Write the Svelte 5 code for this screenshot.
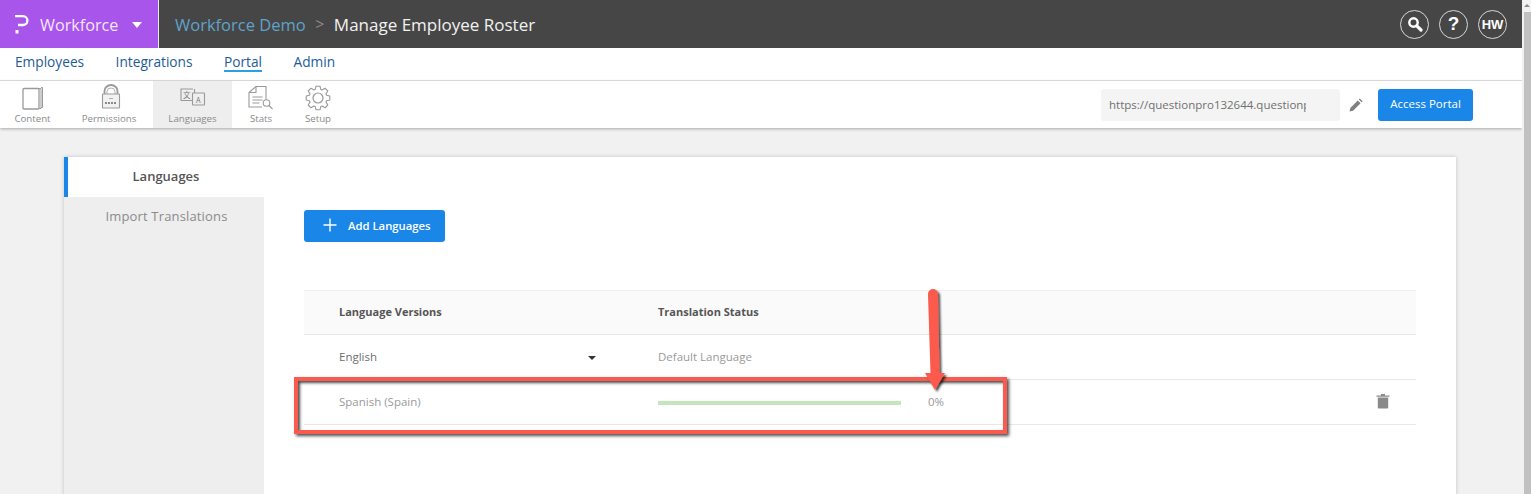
<script>
  const nav = ["Employees", "Integrations", "Portal", "Admin"];
  const tools = [
    { label: "Content", width: 65 },
    { label: "Permissions", width: 88 },
    { label: "Languages", width: 79, active: true },
    { label: "Stats", width: 58 },
    { label: "Setup", width: 56 },
  ];

  // outline of the Setup cog, 8 teeth around (cx, cy)
  function gearPath(cx, cy, outer, inner) {
    const pts = [];
    const step = Math.PI / 8;
    for (let i = 0; i < 8; i++) {
      const a = (i * Math.PI) / 4 - Math.PI / 2;
      const list = [
        [a - step * 0.42, outer],
        [a + step * 0.42, outer],
        [a + step * 0.8, inner],
        [a + step * 1.2, inner],
      ];
      for (const [t, r] of list) {
        pts.push(`${(cx + Math.cos(t) * r).toFixed(1)} ${(cy + Math.sin(t) * r).toFixed(1)}`);
      }
    }
    return "M" + pts.join("L") + "Z";
  }
</script>

<div class="page">
  <div class="main">
    <header class="topbar">
      <div class="brand">
        <svg width="14" height="19" viewBox="0 0 14 19" class="logo">
          <path d="M0 1.200h8a4.400 4.400 0 0 1 0 8.800H3" fill="none" stroke="#fff" stroke-width="2.300" />
          <rect x="0.500" y="15" width="3" height="3.500" fill="#fff" />
        </svg>
        <span class="brand-name">Workforce</span>
        <span class="caret"></span>
      </div>
      <div class="crumbs">
        <span class="crumb-link">Workforce Demo</span>
        <span class="crumb-sep">&gt;</span>
        <span class="crumb-page">Manage Employee Roster</span>
      </div>
      <div class="top-icons">
        <span class="circle">
          <svg width="16" height="16" viewBox="0 0 16 16">
            <circle cx="6.500" cy="6.500" r="4.200" fill="none" stroke="#fff" stroke-width="2.400" />
            <path d="M9.800 9.800L14 14" stroke="#fff" stroke-width="3.200" stroke-linecap="round" />
          </svg>
        </span>
        <span class="circle q">?</span>
        <span class="circle hw">HW</span>
      </div>
    </header>

    <nav class="nav">
      {#each nav as item}
        <span class="nav-item" class:current={item === "Portal"}>{item}</span>
      {/each}
    </nav>

    <div class="toolbar">
      {#each tools as tool}
        <div class="tool" class:active={tool.active} style="width: {tool.width}px">
          <svg width="34" height="28" viewBox="0 0 34 28" fill="none" stroke="#9a9a9a" stroke-width="1">
            {#if tool.label === "Content"}
              <path d="M23 4.500h2v20h-2" />
              <path d="M25 3.500h1.500v20H25" />
              <rect x="7" y="4.500" width="16" height="20.500" rx="1" stroke-width="1.300" />
            {:else if tool.label === "Permissions"}
              <path d="M12.500 10V7a6.500 6 0 0 1 13 0v3" stroke-width="1.800" />
              <path d="M15 10V7.500a4 3.500 0 0 1 8 0V10" stroke-width="0.800" />
              <rect x="10.500" y="10" width="17" height="14" rx="0.500" fill="#f2f2f2" stroke-width="1.100" />
              <path d="M13 19h12" stroke-width="2" stroke-dasharray="2 1" stroke="#8a8a8a" />
              <path d="M17 14.500h4" stroke-width="0.800" />
            {:else if tool.label === "Languages"}
              <path d="M17 5H5v11.500h11" stroke-width="1.100" />
              <path d="M18.500 5v4" stroke-width="1.100" />
              <rect x="16.500" y="9" width="12" height="12" rx="0.500" stroke-width="1.100" />
              <text x="7" y="14" class="glyph">文</text>
              <text x="20" y="18.500" class="glyph">A</text>
            {:else if tool.label === "Stats"}
              <path d="M12 2.500h10v13M12 2.500l-7 6v14.500h13" stroke-width="1.100" />
              <path d="M5 8.500h7v-6" stroke-width="1.100" />
              <path d="M8.500 13h10M8.500 16h10M8.500 19h7" stroke-width="1" />
              <circle cx="22.500" cy="19" r="3.300" stroke-width="1.100" />
              <path d="M25 21.500l3.500 3.500" stroke-width="1.100" />
            {:else}
              <path d={gearPath(17, 14, 12, 9)} stroke-width="1.100" stroke-linejoin="round" />
              <circle cx="17" cy="14" r="5" stroke-width="1.200" />
            {/if}
          </svg>
          <span class="tool-label">{tool.label}</span>
        </div>
      {/each}
      <div class="portal">
        <input class="url" readonly value="https://questionpro132644.questionpro.com/portal" />
        <svg width="14" height="14" viewBox="0 0 14 14" class="pencil">
          <path d="M0.500 13.500l.8-3.600 7.500-7.500 2.800 2.800-7.500 7.500zM9.800 1.400l1-1 2.800 2.800-1 1z" fill="#808080" />
        </svg>
        <button class="primary access">Access Portal</button>
      </div>
    </div>

    <div class="body">
      <section class="card">
        <aside class="side">
          <div class="side-item selected">Languages</div>
          <div class="side-item">Import Translations</div>
        </aside>
        <div class="content">
          <button class="primary add">
            <svg width="14" height="14" viewBox="0 0 14 14">
              <path d="M7 0.500v13M0.500 7h13" stroke="#fff" stroke-width="1.400" />
            </svg>
            Add Languages
          </button>
          <div class="table">
            <div class="row head">
              <div class="c1">Language Versions</div>
              <div class="c2">Translation Status</div>
            </div>
            <div class="row">
              <div class="c1 english">English<span class="small-caret"></span></div>
              <div class="c2 muted">Default Language</div>
            </div>
            <div class="row">
              <div class="c1 muted">Spanish (Spain)</div>
              <div class="c2 progress">
                <div class="bar"></div>
                <span class="muted pct">0%</span>
              </div>
              <svg class="trash" width="14" height="16" viewBox="0 0 14 16">
                <path d="M0.500 2.500h13v1.300h-13zM5 1h4v1.500H5z" fill="#8a8a8a" />
                <path d="M1.800 4.500h10.400v10a1 1 0 0 1-1 1H2.800a1 1 0 0 1-1-1z" fill="#8a8a8a" />
              </svg>
            </div>
          </div>
        </div>
      </section>
    </div>
  </div>
  <div class="scrollbar">
    <span class="up"></span>
    <div class="thumb"></div>
  </div>

  <!-- annotation drawn over the screenshot -->
  <div class="callout"></div>
  <svg class="arrow" width="40" height="112" viewBox="0 0 40 112">
    <defs>
      <filter id="sh" x="-30%" y="-10%" width="170%" height="125%">
        <feDropShadow dx="2" dy="2" stdDeviation="1.200" flood-color="#000" flood-opacity="0.7" />
      </filter>
    </defs>
    <path
      d="M10 5a5 5 0 0 1 10 0L21.500 84H27L17 101 7 84h5.500z"
      fill="#fb5a4e"
      filter="url(#sh)"
    />
  </svg>
</div>

<style>
  :global(body) {
    margin: 0;
    background: #f1f1f1;
    font-family: "Open Sans", "Noto Sans", sans-serif;
  }

  .page {
    position: relative;
    display: flex;
    width: 1531px;
    height: 494px;
    overflow: hidden;
  }

  .main {
    flex: 1;
    min-width: 0;
  }

  .topbar {
    display: flex;
    align-items: center;
    height: 48px;
    background: #464646;
  }

  .brand {
    display: flex;
    align-items: center;
    box-sizing: border-box;
    width: 159px;
    height: 48px;
    padding-left: 15px;
    background: #a855eb;
    border-right: 1px solid #e8e8e8;
    color: #f3e6fd;
    font-size: 16.200px;
  }

  .brand-name {
    margin-left: 11px;
    padding-top: 1px;
  }

  .caret {
    margin-left: 14px;
    margin-top: 1px;
    border-left: 5.500px solid transparent;
    border-right: 5.500px solid transparent;
    border-top: 6px solid #fff;
  }

  .crumbs {
    display: flex;
    align-items: center;
    margin-left: 16px;
    font-size: 17px;
  }

  .crumb-link {
    color: #5fa3c9;
    font-size: 16.500px;
  }

  .crumb-sep {
    margin: 0 9.500px;
    color: #8a8a8a;
    font-size: 16px;
  }

  .crumb-page {
    color: #f2f2f2;
  }

  .top-icons {
    display: flex;
    gap: 10px;
    margin-left: auto;
    margin-right: 15px;
  }

  .circle {
    display: flex;
    align-items: center;
    justify-content: center;
    box-sizing: border-box;
    width: 29px;
    height: 29px;
    border: 1px solid #d8d8d8;
    border-radius: 50%;
    color: #fff;
    font-family: "Liberation Sans", sans-serif;
    font-weight: 700;
  }

  .q {
    font-size: 19px;
  }

  .hw {
    font-size: 13px;
  }

  .nav {
    display: flex;
    gap: 31.500px;
    box-sizing: border-box;
    height: 33px;
    padding: 4px 0 0 15px;
    background: #fff;
    border-bottom: 1px solid #e2e2e2;
  }

  .nav-item {
    height: 18px;
    color: #1d5c97;
    font-size: 13.700px;
    line-height: 20px;
  }

  .nav-item.current {
    border-bottom: 2px solid #2a9fe3;
  }

  .toolbar {
    position: relative;
    display: flex;
    height: 47px;
    background: #fff;
    box-shadow: 0 1px 3px rgba(0, 0, 0, 0.3);
  }

  .tool {
    display: flex;
    flex-direction: column;
    align-items: center;
    height: 47px;
    color: #8a8a8a;
    font-size: 9.700px;
  }

  .tool.active {
    background: #eeeeee;
  }

  .tool svg {
    margin-top: 3px;
  }

  .tool-label {
    line-height: 13px;
    margin-top: 0;
  }

  .glyph {
    fill: #777;
    stroke: none;
    font-size: 7.500px;
    font-family: "Noto Sans CJK SC", "Open Sans", sans-serif;
  }

  .portal {
    display: flex;
    align-items: center;
    margin-left: auto;
    margin-right: 49px;
    height: 47px;
  }

  .url {
    box-sizing: border-box;
    width: 239px;
    height: 32px;
    padding: 0 34px 0 8px;
    background: #f4f4f4;
    border: 0;
    border-radius: 3px;
    outline: 0;
    color: #707070;
    font-family: inherit;
    font-size: 11.500px;
  }

  .pencil {
    margin: 0 15px 0 9px;
  }

  .primary {
    border: 0;
    border-radius: 3px;
    background: #1a87e8;
    color: #fff;
    font-family: inherit;
    font-size: 11.500px;
  }

  .access {
    width: 95px;
    height: 32px;
    padding: 0 0 2px;
  }

  .body {
    padding: 29px 66px 0 64px;
  }

  .card {
    display: flex;
    height: 400px;
    background: #fff;
    box-shadow: 0 0 4px rgba(0, 0, 0, 0.2);
  }

  .side {
    width: 200px;
    flex: none;
    background: #eeeeee;
  }

  .side-item {
    box-sizing: border-box;
    height: 40px;
    padding-left: 5px;
    color: #8b8b8b;
    font-size: 13px;
    line-height: 38px;
    letter-spacing: 0.16px;
    text-align: center;
  }

  .side-item.selected {
    padding-left: 0;
    background: #fff;
    border-left: 4px solid #1a87e8;
    color: #555;
    font-weight: 600;
    letter-spacing: 0;
  }

  .content {
    flex: 1;
    padding: 53px 40px 0;
  }

  .add {
    display: flex;
    align-items: center;
    gap: 11px;
    width: 141px;
    height: 32px;
    padding: 0 0 2px 19px;
    font-weight: 600;
    font-size: 11.300px;
  }

  .table {
    margin-top: 48px;
  }

  .row {
    display: flex;
    align-items: center;
    height: 45px;
    box-sizing: border-box;
    padding-bottom: 2px;
    border-bottom: 1px solid #e8e8e8;
    color: #6f6f6f;
    font-size: 11.500px;
  }

  .row.head {
    background: #fafafa;
    border-top: 1px solid #f0f0f0;
    color: #555;
    font-weight: 700;
    font-size: 11px;
  }

  .c1 {
    position: relative;
    box-sizing: border-box;
    width: 354px;
    padding-left: 35px;
  }

  .small-caret {
    position: absolute;
    right: 62px;
    top: 7px;
    border-left: 4px solid transparent;
    border-right: 4px solid transparent;
    border-top: 4px solid #333;
  }

  .c2 {
    flex: 1;
  }

  .muted {
    color: #9a9a9a;
  }

  .progress {
    display: flex;
    align-items: center;
  }

  .bar {
    width: 243px;
    height: 4px;
    margin-top: 3px;
    background: #c5e6bd;
  }

  .pct {
    margin-left: 27px;
  }

  .trash {
    margin-right: 26px;
  }

  .scrollbar {
    position: relative;
    flex: none;
    width: 9px;
    background: #f1f1f1;
  }

  .up {
    position: absolute;
    left: 2px;
    top: 4px;
    border-left: 3.500px solid transparent;
    border-right: 3.500px solid transparent;
    border-bottom: 3px solid #8a8a8a;
  }

  .thumb {
    position: absolute;
    top: 12px;
    left: 2px;
    right: 0;
    bottom: 0;
    background: #c1c1c1;
  }

  .callout {
    position: absolute;
    left: 294px;
    top: 377px;
    width: 713px;
    height: 57px;
    box-sizing: border-box;
    border: 4px solid #fb5a4e;
    box-shadow:
      2px 2px 3px rgba(0, 0, 0, 0.7),
      inset 2px 2px 3px rgba(0, 0, 0, 0.7);
  }

  .arrow {
    position: absolute;
    left: 918px;
    top: 289px;
  }
</style>
